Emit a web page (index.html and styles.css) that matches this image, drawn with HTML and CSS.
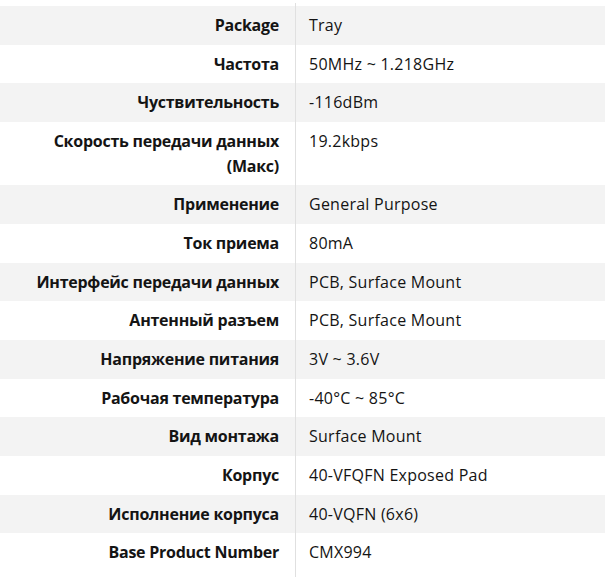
FILE: index.html
```html
<!DOCTYPE html>
<html lang="ru">
<head>
<meta charset="utf-8">
<link rel="stylesheet" href="styles.css">
</head>
<body>
<div class="specs">
  <div class="row"><div class="label">Package</div><div class="value">Tray</div></div>
  <div class="row"><div class="label">Частота</div><div class="value">50MHz ~ 1.218GHz</div></div>
  <div class="row"><div class="label">Чуствительность</div><div class="value">-116dBm</div></div>
  <div class="row"><div class="label">Скорость передачи данных (Макс)</div><div class="value">19.2kbps</div></div>
  <div class="row"><div class="label">Применение</div><div class="value">General Purpose</div></div>
  <div class="row"><div class="label">Ток приема</div><div class="value">80mA</div></div>
  <div class="row"><div class="label">Интерфейс передачи данных</div><div class="value">PCB, Surface Mount</div></div>
  <div class="row"><div class="label">Антенный разъем</div><div class="value">PCB, Surface Mount</div></div>
  <div class="row"><div class="label">Напряжение питания</div><div class="value">3V ~ 3.6V</div></div>
  <div class="row"><div class="label">Рабочая температура</div><div class="value">-40°C ~ 85°C</div></div>
  <div class="row"><div class="label">Вид монтажа</div><div class="value">Surface Mount</div></div>
  <div class="row"><div class="label">Корпус</div><div class="value">40-VFQFN Exposed Pad</div></div>
  <div class="row"><div class="label">Исполнение корпуса</div><div class="value">40-VQFN (6x6)</div></div>
  <div class="row"><div class="label">Base Product Number</div><div class="value">CMX994</div></div>
</div>
</body>
</html>
```
FILE: styles.css
```css
html, body {
  margin: 0;
  padding: 0;
  background: #ffffff;
}
body {
  font-family: "Open Sans", "Noto Sans", sans-serif;
  font-size: 16px;
  color: #141414;
}
.specs {
  padding-top: 6px;
  width: 605px;
  background: linear-gradient(#e0e0e0, #e0e0e0) no-repeat 295px 3px / 1px 3px;
}
.row {
  display: grid;
  grid-template-columns: 296px 1fr;
}
.row:nth-child(odd) {
  background: #f3f3f3;
}
.label {
  font-weight: 700;
  text-align: right;
  padding: 7px 16px 7px 30px;
  line-height: 24.67px;
  letter-spacing: -0.25px;
  border-right: 1px solid #e0e0e0;
}
.row:last-child .label {
  padding-bottom: 12px;
}
.value {
  padding: 7px 12px 7px 13px;
  line-height: 24.67px;
  letter-spacing: 0.25px;
}
```
